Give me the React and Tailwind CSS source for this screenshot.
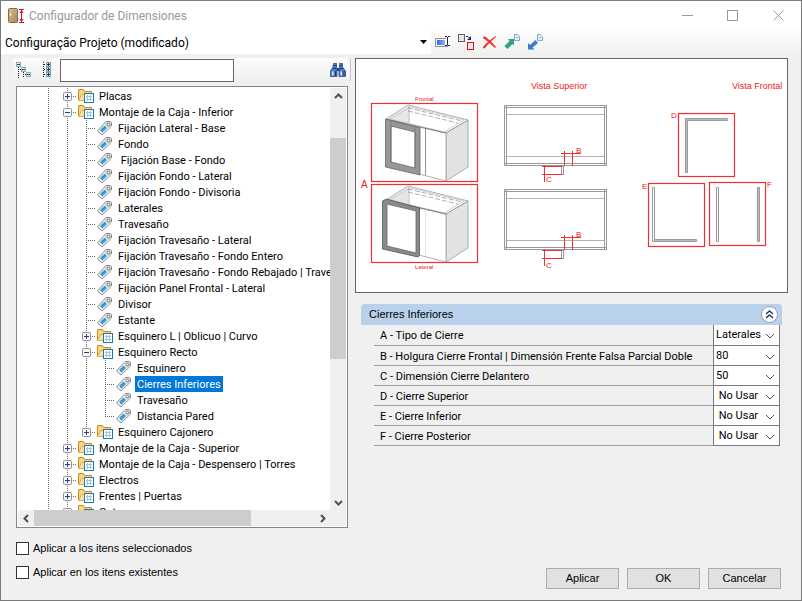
import React, { useState } from 'react';

const TREE = [
  { level: 1, label: 'Placas', state: 'closed' },
  { level: 1, label: 'Montaje de la Caja - Inferior', state: 'open' },
  { level: 2, label: 'Fijación Lateral - Base' },
  { level: 2, label: 'Fondo' },
  { level: 2, label: '\u00a0Fijación Base - Fondo' },
  { level: 2, label: 'Fijación Fondo - Lateral' },
  { level: 2, label: 'Fijación Fondo - Divisoria' },
  { level: 2, label: 'Laterales' },
  { level: 2, label: 'Travesaño' },
  { level: 2, label: 'Fijación Travesaño - Lateral' },
  { level: 2, label: 'Fijación Travesaño - Fondo Entero' },
  { level: 2, label: 'Fijación Travesaño - Fondo Rebajado | Travesaño' },
  { level: 2, label: 'Fijación Panel Frontal - Lateral' },
  { level: 2, label: 'Divisor' },
  { level: 2, label: 'Estante' },
  { level: 2, label: 'Esquinero L | Oblicuo | Curvo', state: 'closed' },
  { level: 2, label: 'Esquinero Recto', state: 'open' },
  { level: 3, label: 'Esquinero' },
  { level: 3, label: 'Cierres Inferiores' },
  { level: 3, label: 'Travesaño' },
  { level: 3, label: 'Distancia Pared', last: true },
  { level: 2, label: 'Esquinero Cajonero', state: 'closed', last: true },
  { level: 1, label: 'Montaje de la Caja - Superior', state: 'closed' },
  { level: 1, label: 'Montaje de la Caja - Despensero | Torres', state: 'closed' },
  { level: 1, label: 'Electros', state: 'closed' },
  { level: 1, label: 'Frentes | Puertas', state: 'closed' },
  { level: 1, label: 'Cotas', state: 'closed' },
];

const FIELDS = [
  { id: 'a', label: 'A - Tipo de Cierre', options: ['Laterales', 'Frontal'] },
  { id: 'b', label: 'B - Holgura Cierre Frontal | Dimensión Frente Falsa Parcial Doble', options: ['80', '50'] },
  { id: 'c', label: 'C - Dimensión Cierre Delantero', options: ['50', '80'] },
  { id: 'd', label: 'D - Cierre Superior', options: ['\u00a0No Usar', '\u00a0Usar'] },
  { id: 'e', label: 'E - Cierre Inferior', options: ['\u00a0No Usar', '\u00a0Usar'] },
  { id: 'f', label: 'F - Cierre Posterior', options: ['\u00a0No Usar', '\u00a0Usar'] },
];

function AppIcon() {
  return (
    <svg width="17" height="16" viewBox="0 0 17 16">
      <defs>
        <linearGradient id="door" x1="0" y1="0" x2="1" y2="1">
          <stop offset="0" stopColor="#d9bf98" />
          <stop offset="1" stopColor="#a98555" />
        </linearGradient>
      </defs>
      <rect x="0.5" y="0.5" width="9" height="14" rx="1" fill="url(#door)" stroke="#8d6b42" />
      <path d="M2.5 5v3" stroke="#f6efe2" />
      <path d="M11 1.5h5M11 14.5h5M13.5 2v12" stroke="#e0102c" />
      <path d="M11.5 5l2-3 2 3zM11.5 11l2 3 2-3z" fill="#e0102c" />
    </svg>
  );
}

function RenameIcon() {
  return (
    <svg width="16" height="14" viewBox="0 0 16 14">
      <defs>
        <linearGradient id="blueBar" x1="0" x2="1">
          <stop offset="0" stopColor="#2f67d8" />
          <stop offset="1" stopColor="#8db4f5" />
        </linearGradient>
      </defs>
      <rect x="0.5" y="3.5" width="12" height="8" fill="#fff" stroke="#8a8f99" />
      <rect x="2" y="5" width="8" height="5" fill="url(#blueBar)" />
      <path d="M12.5 2v8" stroke="#fff" strokeWidth="3" />
      <path d="M10 1.5h2M13 1.5h2M12.5 2v8M10 10.5h2M13 10.5h2" stroke="#222" />
    </svg>
  );
}

function CopyIcon() {
  return (
    <svg width="17" height="17" viewBox="0 0 17 17">
      <rect x="0.5" y="0.5" width="6" height="7" fill="#ebe6e4" stroke="#6f5c5c" />
      <path d="M8 2.5h2l2 2" stroke="#17307c" fill="none" />
      <path d="M13 2v4H9z" fill="#17307c" />
      <rect x="9.5" y="8.5" width="6" height="7" fill="#e6e8ea" stroke="#cf1414" />
    </svg>
  );
}

function DeleteIcon() {
  return (
    <svg width="15" height="13" viewBox="0 0 15 13">
      <path d="M1 1l2-.5C6 2.5 11 7 14 11l-1 1C9.5 8.5 5 5 1 2z" fill="#f0312c" />
      <path d="M13 .5h1.5C10 4.5 6 8 3 12l-2 .5V11C4 7 9 3 13 .5z" fill="#f0312c" />
    </svg>
  );
}

function TransferIcon({ color, down }) {
  return (
    <svg width="16" height="16" viewBox="0 0 16 16">
      {down ? (
        <path d="M1 9v6.5h6.500L5.500 13.500 11 9 8.500 6 3 11z" fill={color} />
      ) : (
        <path d="M10 5H4l1.500 2L.5 12l3 3 5-5 1.500 1.500z" fill={color} />
      )}
      <path d="M10.5 0.5h3l2 2v4h-5z" fill="#e8f1fc" stroke="#86a8d6" />
      <path d="M12 3.5h2" stroke="#86a8d6" />
    </svg>
  );
}

function CollapseAllIcon() {
  return (
    <svg width="16" height="16" viewBox="0 0 16 16" fill="none">
      <path d="M2.5 5v11M7.5 10v6M4 7.5h2M9 12.5h2" stroke="#222" strokeDasharray="1 1" />
      {[[0, 0], [5, 5], [10, 10]].map(([x, y]) => (
        <g key={x}>
          <rect x={x + 0.5} y={y + 0.5} width="4" height="4" fill="#e4eff3" stroke="#8fa9b3" />
          <path d={`M${x + 1} ${y + 2.5}h3`} stroke="#1d4c66" />
        </g>
      ))}
    </svg>
  );
}

function ExpandAllIcon() {
  return (
    <svg width="10" height="16" viewBox="0 0 10 16" fill="none">
      <path d="M1.5 0v16M2 2.5h2M2 7.5h2M2 12.5h2" stroke="#222" strokeDasharray="1 1" />
      {[0, 5, 10].map((y) => (
        <g key={y}>
          <rect x="4.5" y={y + 0.5} width="4" height="4" fill="#dcebf0" stroke="#7f9fac" />
          <path d={`M5 ${y + 2.5}h3M6.5 ${y + 1}v3`} stroke="#143a52" />
        </g>
      ))}
    </svg>
  );
}

function BinocularsIcon() {
  return (
    <svg width="16" height="14" viewBox="0 0 16 14">
      <path d="M3.5 .5h3V4l.5 2v7.500H.5V8L3 4zM9.5 .5h3V4l3 4v5.500H9V6l.5-2z" fill="#4f7cc4" stroke="#264a8c" strokeWidth=".8" />
      <path d="M7 5h2v3H7z" fill="#1b3a78" />
      <path d="M4 2.5h2M10 2.5h2M3 5.5h3M10 5.5h3" stroke="#16346f" />
      <path d="M2 8.500h1.500v4H2zM10.5 8.500H12v4h-1.500z" fill="#dbe9fb" />
      <path d="M5.5 8v5M14 8v5" stroke="#1b3a78" />
    </svg>
  );
}

function FolderIcon() {
  return (
    <svg width="20" height="16" viewBox="0 0 20 16" className="shrink-0">
      <path d="M1.5 12.5v-11h5l1 2h7v9z" fill="#fbd978" stroke="#c98a2b" />
      <path d="M1.5 12.5l3-6h11l-1 6z" fill="#ffe39a" stroke="#e0ac4d" />
      <rect x="7.5" y="5.5" width="9" height="9" fill="#fff" stroke="#1779b5" />
      <path d="M9 8.5h6M9 11.5h6M10.5 7v6M13.5 7v6" stroke="#9cc4e4" />
    </svg>
  );
}

function TagIcon() {
  return (
    <svg width="20" height="16" viewBox="0 0 20 16" className="shrink-0">
      <path d="M10 1.5h4.5l1 1V6L6 15 1.5 11z" fill="#f6f6f6" stroke="#8b8b8b" />
      <path d="M10 2h4.5l.5.5V6l-2.500 2.500L8.500 4z" fill="#d2d2d2" />
      <path d="M8.5 5.5l2.500 2.500L6.500 12.500 4 10z" fill="#2b93cf" />
      <path d="M5.5 8.5L8 11M7 7l2.500 2.500" stroke="#7cc4ec" strokeWidth=".6" />
      <circle cx="12.5" cy="4.5" r="1.3" fill="#fff" stroke="#777" />
    </svg>
  );
}

// one 19px wide indent column of the tree, with its dotted guide line
function Guide({ node, kind }) {
  if (kind === 'line') {
    return (
      <svg width="19" height="16" className="shrink-0">
        <path d="M9.5 0v16" stroke="#6a6a6a" strokeDasharray="1 1" />
      </svg>
    );
  }
  return (
    <svg width="19" height="16" className="shrink-0" fill="none">
      <path d={node.last ? 'M9.5 0v9' : 'M9.5 0v16'} stroke="#6a6a6a" strokeDasharray="1 1" />
      <path d="M9 8.5h10" stroke="#6a6a6a" strokeDasharray="1 1" />
      {node.state && (
        <>
          <rect x="5.5" y="4.5" width="8" height="8" rx="1" fill="#f7f7f7" stroke="#919191" />
          <path d={node.state === 'closed' ? 'M7 8.5h5M9.5 6v5' : 'M7 8.5h5'} stroke="#27408b" />
        </>
      )}
    </svg>
  );
}

function TreeRow({ node, selected, onSelect }) {
  return (
    <li className="flex h-4 items-center whitespace-nowrap">
      {Array.from({ length: node.level }).map((_, i) => (
        <Guide key={i} node={node} kind="line" />
      ))}
      <Guide node={node} kind="branch" />
      {node.state ? <FolderIcon /> : <TagIcon />}
      <button
        onClick={onSelect}
        className={`h-4 px-0.5 pt-px leading-[15px] ${selected ? 'bg-[#0078d7] text-white' : ''}`}
      >
        {node.label}
      </button>
    </li>
  );
}

function Chevron({ d, label }) {
  return (
    <button aria-label={label} className="flex h-4 w-4 shrink-0 items-center justify-center">
      <svg width="9" height="9" viewBox="0 0 9 9" fill="none">
        <path d={d} stroke="#505050" strokeWidth="2" />
      </svg>
    </button>
  );
}

function Cabinet({ lateral }) {
  return (
    <g stroke="#9c9c9c" fill="none" strokeWidth=".8">
      <path d="M386 119l22-13v17l-10 3z" fill="#e6e6e6" stroke="none" />
      <path d="M446 133l22-13v47l-22 14z" fill="#e2e2e2" />
      <path d="M386 119l22-14 60 15-22 13z" />
      <path d="M390 119l20-12 54 13-20 12z" stroke="#c4c4c4" />
      <path d="M408 108l54 13M408 111l50 12" strokeDasharray="5 2" />
      <path d="M409 106v17" />
      <path d="M419 127l27 6v48l-27-7z" fill="#fff" />
      <path d="M386 119l60 14" stroke="#777" />
      <path d="M425.5 128v47" stroke={lateral ? '#ddd' : '#777'} />
      {lateral ? (
        <>
          <path d="M382.5 120l4-2 33 9v47l-1.500 2-35.500-8z" fill="#8a8a8a" stroke="#555" />
          <path d="M387 123l29 7v42l-29-7z" fill="#fff" stroke="#666" />
        </>
      ) : (
        <>
          <path d="M385.5 119l34.500 9v47l-34.500-8z" fill="#979797" stroke="#666" />
          <path d="M391 126l24 6v36l-24-6z" fill="#fff" stroke="#666" />
          <path d="M391 120v42M415 127v41" stroke="#777" />
        </>
      )}
    </g>
  );
}

function TopView() {
  return (
    <g fill="none" stroke="#999">
      <rect x="504.5" y="105.5" width="102" height="60" />
      <path d="M506.5 106v59M604.5 106v59M505 107.5h101M505 163.5h101" />
      <path d="M507 114.5h97M507 156.5h97" stroke="#b4b4b4" />
      <rect x="561.5" y="166.5" width="2" height="8" />
      <g stroke="#f03030">
        <path d="M564.5 151v15M572.5 151v15M561 153.5h20" />
        <path d="M544.5 165v17M542 166.5h20M542 174.5h20" />
      </g>
    </g>
  );
}

function Diagram() {
  return (
    <svg viewBox="356 59 431 233" className="block w-full" fontFamily="Liberation Sans, Arial, sans-serif">
      <g fill="none" stroke="#f03030" strokeWidth="1.2">
        <rect x="371.5" y="103.5" width="106" height="78" />
        <rect x="371.5" y="184.5" width="106" height="78" />
        <rect x="678.5" y="113.5" width="56" height="63" />
        <rect x="648.5" y="183.5" width="56" height="63" />
        <rect x="709.5" y="182.5" width="56" height="63" />
      </g>
      <Cabinet />
      <g transform="translate(0 81)">
        <Cabinet lateral />
      </g>
      <TopView />
      <g transform="translate(0 84)">
        <TopView />
      </g>
      <g fill="#bdbdbd" stroke="#9a9a9a">
        <path d="M685.5 118.5h42v2h-40v52h-2z" />
        <path d="M654.5 239.5h42v2h-42z" />
        <path d="M652.5 187.5h2v54h-2zM716.5 187.5h2v54h-2z" fill="#fff" />
        <path d="M757.5 187.5h2v54h-2z" />
      </g>
      <g fill="#ee2020">
        <text x="531" y="89" fontSize="9">Vista Superior</text>
        <text x="732" y="89" fontSize="9">Vista Frontal</text>
        <text x="415" y="101" fontSize="6">Frontal</text>
        <text x="415" y="269" fontSize="6">Lateral</text>
        <text x="361" y="188" fontSize="10">A</text>
        <text x="576" y="153" fontSize="8">B</text>
        <text x="576" y="237" fontSize="8">B</text>
        <text x="546" y="182" fontSize="8">C</text>
        <text x="546" y="268" fontSize="8">C</text>
        <text x="671" y="118" fontSize="8">D</text>
        <text x="642" y="189" fontSize="8">E</text>
        <text x="767" y="187" fontSize="8">F</text>
      </g>
    </svg>
  );
}

function PropertyRow({ field }) {
  return (
    <div className="flex h-5 first:h-[21px]">
      <label
        htmlFor={field.id}
        className="flex flex-1 items-center overflow-hidden whitespace-nowrap border-b border-[#a0a0a0] pl-1.5 pt-[3px]"
      >
        {field.label}
      </label>
      <div className="relative w-[67px] border-x border-b border-[#7a7a7a] bg-white">
        <select id={field.id} className="h-full w-full appearance-none bg-white pl-0.5 pt-px outline-none">
          {field.options.map((o) => (
            <option key={o}>{o}</option>
          ))}
        </select>
        <svg width="10" height="6" viewBox="0 0 10 6" className="pointer-events-none absolute right-1 top-2">
          <path d="M1 1l4 4 4-4" stroke="#555" fill="none" />
        </svg>
      </div>
    </div>
  );
}

export default function App() {
  const [selected, setSelected] = useState(18);
  const [search, setSearch] = useState('');

  return (
    <div className="flex h-screen flex-col border border-[#7a7a7a] bg-[#f0f0f0] font-[Roboto,'Liberation_Sans',sans-serif] text-[11px] text-black">
      {/* Title bar */}
      <header className="flex h-[29px] shrink-0 items-center bg-white pl-[7px]">
        <AppIcon />
        <h1 className="ml-1 flex-1 text-[12px] text-[#999]">Configurador de Dimensiones</h1>
        <div className="flex text-[#999]">
          <button aria-label="Minimizar" className="flex w-[45px] justify-center">
            <svg width="11" height="11"><path d="M0 5.5h11" stroke="currentColor" /></svg>
          </button>
          <button aria-label="Maximizar" className="flex w-[45px] justify-center">
            <svg width="11" height="11"><rect x="0.5" y="0.5" width="10" height="10" fill="none" stroke="currentColor" /></svg>
          </button>
          <button aria-label="Cerrar" className="flex w-[46px] justify-center">
            <svg width="11" height="11"><path d="M0.5 0.5l10 10M10.5 0.5l-10 10" stroke="currentColor" /></svg>
          </button>
        </div>
      </header>

      {/* Configuration bar */}
      <div className="flex h-6 shrink-0 bg-linear-to-b from-[#fdfdfd] to-[#f0f0f0]">
        <div className="relative w-[430px]">
          <select
            aria-label="Configuración"
            className="h-full w-full appearance-none bg-white pl-1 pt-px text-[12px] outline-none"
          >
            <option>Configuração Projeto (modificado)</option>
          </select>
          <svg width="7" height="4" className="pointer-events-none absolute right-1 top-2.5">
            <path d="M0 0h7L3.5 4z" fill="#000" />
          </svg>
        </div>
        <div className="ml-1 flex items-center gap-[7px]">
          <button aria-label="Renombrar"><RenameIcon /></button>
          <button aria-label="Copiar"><CopyIcon /></button>
          <button aria-label="Eliminar"><DeleteIcon /></button>
          <button aria-label="Exportar"><TransferIcon color="#2fa37c" /></button>
          <button aria-label="Importar"><TransferIcon color="#3a78cf" down /></button>
        </div>
      </div>

      <main className="flex min-h-0 flex-1 gap-1 pl-3 pr-[13px] pt-1">
        {/* Tree panel */}
        <section className="flex w-[338px] shrink-0 flex-col">
          <div className="flex h-6 shrink-0 items-center rounded-r border-r border-[#c4c4c4] bg-linear-to-b from-[#fcfcfc] to-[#f0f0f0] pl-[3px] pr-1">
            <button aria-label="Contraer todo"><CollapseAllIcon /></button>
            <button aria-label="Expandir todo" className="ml-2.5"><ExpandAllIcon /></button>
            <input
              aria-label="Buscar"
              value={search}
              onChange={(e) => setSearch(e.target.value)}
              className="ml-2 h-[23px] w-[174px] border border-[#646464] bg-white px-1 outline-none"
            />
            <button aria-label="Buscar siguiente" className="ml-auto"><BinocularsIcon /></button>
          </div>

          <div className="mx-[3px] mt-1 flex min-h-0 flex-1 flex-col border border-[#828790] bg-white p-px">
            <div className="flex min-h-0 flex-1">
              <ul className="min-w-0 flex-1 overflow-hidden pl-[21px]">
                {TREE.map((node, i) => (
                  <TreeRow key={i} node={node} selected={i === selected} onSelect={() => setSelected(i)} />
                ))}
              </ul>
              <div className="flex w-4 flex-col bg-[#f0f0f0]">
                <Chevron label="Arriba" d="M1 6l3.5-3.5L8 6" />
                <div className="grow-[34]" />
                <div className="grow-[219] bg-[#cdcdcd]" />
                <div className="grow-[134]" />
                <Chevron label="Abajo" d="M1 3l3.5 3.5L8 3" />
              </div>
            </div>
            <div className="flex h-4 shrink-0 bg-[#f0f0f0] pr-4">
              <Chevron label="Izquierda" d="M6 1L2.5 4.5 6 8" />
              <div className="grow-[215] bg-[#cdcdcd]" />
              <div className="grow-[62]" />
              <Chevron label="Derecha" d="M3 1l3.5 3.5L3 8" />
            </div>
          </div>
        </section>

        {/* Preview and properties */}
        <section className="min-w-0 flex-1">
          <div className="border border-[#646464] bg-white">
            <Diagram />
          </div>
          <div className="mx-1.5 mt-[11px]">
            <div className="flex h-[21px] items-center justify-between rounded-t bg-[#b9d1ea] pl-2 pr-1">
              <h2 className="font-['Liberation_Sans',Arial,sans-serif] text-[11px]">Cierres Inferiores</h2>
              <button aria-label="Contraer" className="flex h-[17px] w-[17px] items-center justify-center rounded-full border border-[#8f9bb0] bg-white">
                <svg width="9" height="9" viewBox="0 0 9 9" fill="none">
                  <path d="M1 4l3.5-3L8 4M1 8l3.5-3L8 8" stroke="#1f3864" strokeWidth="1.5" />
                </svg>
              </button>
            </div>
            <div className="ml-[13px] mr-0.5">
              {FIELDS.map((f) => (
                <PropertyRow key={f.id} field={f} />
              ))}
            </div>
          </div>
        </section>
      </main>

      <footer className="flex h-[72px] shrink-0 justify-between pl-[15px] pr-5 font-['Liberation_Sans',Arial,sans-serif]">
        <div className="flex flex-col gap-2 pt-3">
          <label className="flex h-4 items-center gap-1">
            <input type="checkbox" className="h-[13px] w-[13px] appearance-none border border-[#333] bg-white checked:bg-[#0078d7]" />
            Aplicar a los itens seleccionados
          </label>
          <label className="flex h-4 items-center gap-1">
            <input type="checkbox" className="h-[13px] w-[13px] appearance-none border border-[#333] bg-white checked:bg-[#0078d7]" />
            Aplicar en los itens existentes
          </label>
        </div>
        <div className="flex items-end gap-2 pb-[11px]">
          {['Aplicar', 'OK', 'Cancelar'].map((t) => (
            <button key={t} className="h-[21px] w-[73px] border border-[#adadad] bg-[#e1e1e1]">{t}</button>
          ))}
        </div>
      </footer>
    </div>
  );
}
